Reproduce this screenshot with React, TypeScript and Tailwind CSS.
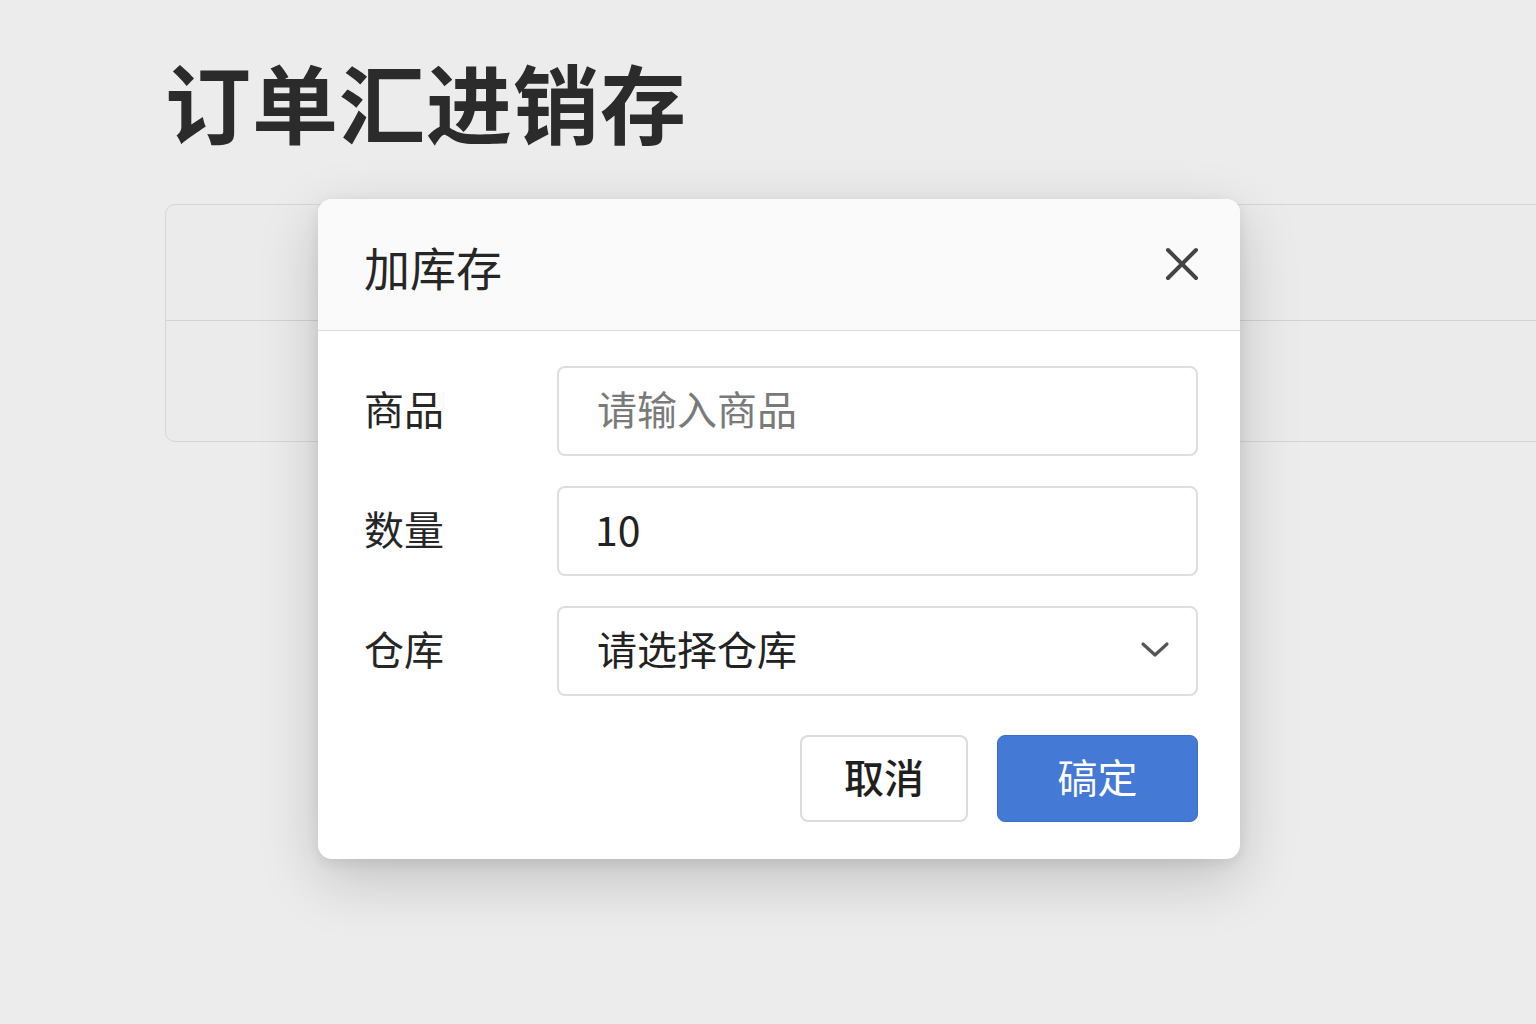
import React from "react";

const font = { fontFamily: '"Noto Sans CJK SC", "Noto Sans", sans-serif' };

function Field({ label, children }: { label: string; children: React.ReactNode }) {
  return (
    <div className="flex items-center">
      <div className="mb-[7px] w-[193px] shrink-0 text-[40px] leading-none text-[#262626]">{label}</div>
      {children}
    </div>
  );
}

export default function App() {
  return (
    <div className="relative h-[1024px] w-[1536px] overflow-hidden bg-[#ececec]" style={font}>
      <div className="pl-[165px] pt-[58px]">
        <h1 className="text-[86px] font-bold leading-none tracking-[1px] text-[#2b2b2b]">订单汇进销存</h1>
        <div className="mt-[60px] mr-[-40px] h-[238px] rounded-[10px] border border-[#d6d6d6] bg-[#ebebeb]">
          <div className="h-[116px] border-b border-[#d2d2d2]" />
        </div>
      </div>

      <div className="absolute left-[318px] top-[199px] w-[922px] overflow-hidden rounded-[14px] bg-white shadow-[0_20px_60px_rgba(0,0,0,0.18),0_4px_14px_rgba(0,0,0,0.08)]">
        <div className="flex h-[132px] items-center justify-between border-b border-[#dcdcdc] bg-[#fafafa] pl-[46px] pr-[42px]">
          <span className="mt-[2px] text-[46px] font-normal leading-none text-[#262626]">加库存</span>
          <svg width="34" height="34" viewBox="0 0 34 34" className="mt-[-2px] mr-[-1px]">
            <path d="M3 3L31 31M31 3L3 31" stroke="#444" strokeWidth="4" strokeLinecap="round" />
          </svg>
        </div>

        <div className="flex flex-col gap-[30px] pl-[46px] pr-[42px] pt-[35px]">
          <Field label="商品">
            <div className="flex h-[90px] flex-1 items-center rounded-[8px] border-2 border-[#dedede] pb-[6px] pl-[38px] text-[40px] leading-none text-[#7a7a7a]">
              请输入商品
            </div>
          </Field>
          <Field label="数量">
            <div className="flex h-[90px] flex-1 items-center rounded-[8px] border-2 border-[#dedede] pb-[6px] pl-[36px] text-[41px] leading-none text-[#222]">
              10
            </div>
          </Field>
          <Field label="仓库">
            <div className="flex h-[90px] flex-1 items-center justify-between rounded-[8px] border-2 border-[#dedede] pl-[38px] pr-[26px] text-[40px] leading-none text-[#222]">
              <span className="mb-[6px]">请选择仓库</span>
              <svg width="30" height="18" viewBox="0 0 30 18" className="mb-[2px]">
                <path d="M3 3L15 14L27 3" fill="none" stroke="#555" strokeWidth="3.2" strokeLinecap="round" strokeLinejoin="round" />
              </svg>
            </div>
          </Field>
        </div>

        <div className="flex justify-end gap-[29px] pb-[37px] pr-[42px] pt-[39px]">
          <button className="flex h-[87px] w-[168px] items-center justify-center rounded-[8px] border-2 border-[#dcdcdc] bg-white pb-[6px] text-[40px] font-medium leading-none text-[#1f1f1f]">
            取消
          </button>
          <button className="flex h-[87px] w-[201px] items-center justify-center rounded-[8px] border border-[#3a6fc9] bg-[#4479d6] pb-[6px] text-[40px] font-normal leading-none text-white">
            碻定
          </button>
        </div>
      </div>
    </div>
  );
}
